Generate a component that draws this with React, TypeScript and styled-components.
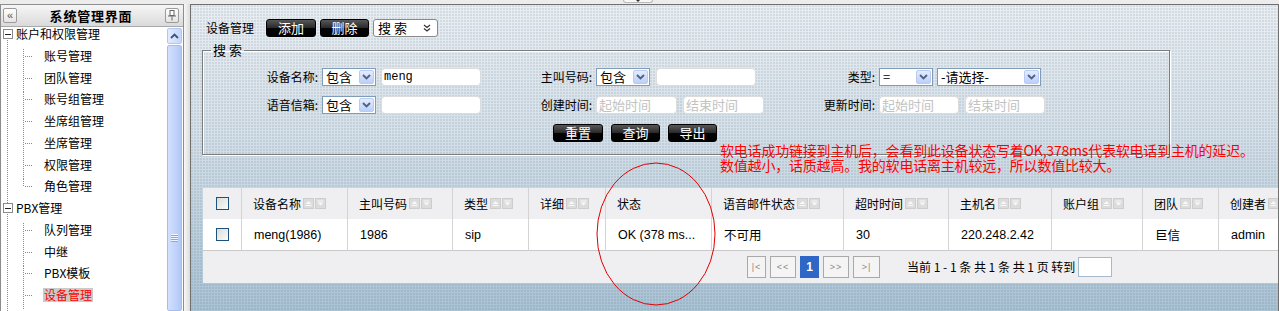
import React from 'react'
import styled, { createGlobalStyle } from 'styled-components'

const CN = `"Noto Sans CJK SC", "Noto Sans", sans-serif`
const LATIN = `"Liberation Sans", "Noto Sans CJK SC", sans-serif`

const GlobalStyle = createGlobalStyle`
  html, body { margin: 0; padding: 0; }
  body {
    background: #ececec;
    font-family: ${CN};
    font-size: 12px;
    color: #000;
    overflow: hidden;
  }
  * { box-sizing: border-box; }
`

const Page = styled.div`
  width: 1279px;
  height: 311px;
  display: flex;
  flex-direction: column;
  overflow: hidden;
`

const TopStrip = styled.div`
  height: 4px;
  flex: none;
  padding-left: 623px;
`

const CollapseTab = styled.div`
  width: 30px;
  height: 3px;
  background: #f6f6f6;
  border: 1px solid #b9b9b9;
  border-top: none;
  border-radius: 0 0 5px 5px;
  display: flex;
  justify-content: center;
`

const TabArrow = styled.span`
  width: 0;
  height: 0;
  border-left: 2px solid transparent;
  border-right: 2px solid transparent;
  border-top: 2px solid #333;
`

const Body = styled.div`
  flex: 1;
  display: flex;
  min-height: 0;
`

/* ---------- sidebar ---------- */

const Sidebar = styled.aside`
  width: 184px;
  flex: none;
  display: flex;
  flex-direction: column;
  background: #fff;
  border: 1px solid #8d8d8d;
  border-bottom: none;
`

const SideHeader = styled.div`
  height: 22px;
  flex: none;
  display: flex;
  align-items: center;
  padding: 0 4px 0 2px;
  background: linear-gradient(#f6f6f6, #dadada);
  border-bottom: 1px solid #a9a9a9;
`

const HeadButton = styled.div`
  width: 14px;
  height: 15px;
  flex: none;
  display: flex;
  align-items: center;
  justify-content: center;
  border: 1px solid #9b9b9b;
  border-radius: 2px;
  background: linear-gradient(#ffffff, #e4e4e4);
  color: #555;
  font-family: ${LATIN};
  font-size: 11px;
  line-height: 1;
`

const SideTitle = styled.div`
  flex: 1;
  text-align: center;
  font-weight: bold;
  font-size: 13px;
  line-height: 15px;
  letter-spacing: 0.8px;
`

const SideBody = styled.div`
  flex: 1;
  display: flex;
  min-height: 0;
`

const TreeList = styled.div`
  flex: 1;
  background: repeating-linear-gradient(to bottom, #8a8a8a 0 1px, transparent 1px 2px) 6px 13px / 1px 100% no-repeat;
`

const RootRow = styled.div`
  height: 21.75px;
  display: flex;
  align-items: flex-start;
  line-height: 14px;
  padding-left: 2px;
`

const RootBox = styled.span`
  width: 10px;
  height: 10px;
  margin-top: 2px;
  margin-right: 3px;
  flex: none;
  display: flex;
  align-items: center;
  justify-content: center;
  border: 1px solid #8a8a8a;
  background: #fff;

  &::after {
    content: '';
    width: 6px;
    height: 1px;
    background: #222;
  }
`

const ChildRow = styled.div<{ $last: boolean }>`
  position: relative;
  height: 21.75px;
  line-height: 14px;
  padding-left: 42px;

  &::before {
    content: '';
    position: absolute;
    left: 22px;
    top: 0;
    width: 1px;
    height: ${({ $last }) => ($last ? '8px' : '100%')};
    background: repeating-linear-gradient(to bottom, #8a8a8a 0 1px, transparent 1px 2px);
  }

  &::after {
    content: '';
    position: absolute;
    left: 23px;
    top: 7px;
    width: 8px;
    height: 1px;
    background: repeating-linear-gradient(to right, transparent 0 1px, #8a8a8a 1px 2px);
  }
`

const ChildLabel = styled.span<{ $selected: boolean }>`
  display: inline-block;
  padding: 0 1px;
  color: ${({ $selected }) => ($selected ? '#ff0000' : '#000')};
  background: ${({ $selected }) => ($selected ? '#cacaca' : 'transparent')};
`

const ScrollTrack = styled.div`
  width: 15px;
  flex: none;
  margin: 1px 1px 0 0;
  display: flex;
  flex-direction: column;
  gap: 1px;
`

const ScrollUp = styled.div`
  height: 16px;
  flex: none;
  display: flex;
  align-items: center;
  justify-content: center;
  border: 1px solid #b3c6ef;
  border-radius: 2px;
  background: linear-gradient(to right, #e3ecfe, #c5d6fb);
`

const ScrollThumb = styled.div`
  flex: 1;
  display: flex;
  justify-content: center;
  padding-top: 188px;
  border: 1px solid #a6bcea;
  border-radius: 2px;
  background: linear-gradient(to right, #d3e0fd, #bcd0fa 70%, #b1c7f5);
`

const Grip = styled.div`
  width: 7px;
  height: 8px;
  background: repeating-linear-gradient(to bottom, #eef4ff 0 1px, #8ea8dc 1px 2px);
`

const Splitter = styled.div`
  width: 6px;
  flex: none;
  background: linear-gradient(to right, #f8f8f8, #dcdcdc);
`

/* ---------- main panel ---------- */

const Main = styled.main`
  flex: 1;
  min-width: 0;
  position: relative;
  overflow: hidden;
  border: 1px solid #707070;
  border-bottom: none;
  background:
    radial-gradient(circle at 1px 1px, rgba(60, 90, 120, 0.12) 0.8px, transparent 1.1px) 0 0 / 3px 3px,
    linear-gradient(#e9eef2 0%, #d5e0e8 42%, #a9c2d3 100%);
`

const Toolbar = styled.div`
  display: flex;
  align-items: center;
  height: 18px;
  margin: 14px 0 0 15px;
`

const ToolbarTitle = styled.span`
  margin-right: 12px;
  line-height: 18px;
`

const BlackButton = styled.button<{ $w: number }>`
  width: ${({ $w }) => $w}px;
  height: 18px;
  padding: 0;
  margin-right: 4px;
  border: 1px solid #000;
  border-radius: 3px;
  background: linear-gradient(#585858 0%, #2a2a2a 48%, #050505 52%, #000 100%);
  color: #fff;
  font-family: ${CN};
  font-size: 13px;
  line-height: 16px;
`

const ToolSelect = styled.div`
  width: 65px;
  height: 18px;
  display: flex;
  align-items: center;
  justify-content: space-between;
  padding: 0 6px 0 4px;
  border: 1px solid #8a8a8a;
  border-radius: 3px;
  background: #fff;
  font-size: 13px;
  line-height: 16px;
`

const SearchSet = styled.fieldset`
  width: 968px;
  min-width: 0;
  margin: 6px 0 0 11px;
  padding: 11px 0 12px;
  border: 1px solid #7d7d7d;
  box-shadow: inset 1px 1px 0 #fff, 1px 1px 0 #fff;
`

const SearchLegend = styled.legend`
  margin-left: 8px;
  padding: 0 2px;
  font-size: 13px;
  line-height: 14px;
`

const FormGrid = styled.div`
  display: grid;
  grid-template-columns: 119px 159px 115px 168px 115px auto;
  row-gap: 10px;
  align-items: center;
`

const FieldLabel = styled.label`
  text-align: right;
  padding-right: 4px;
  line-height: 18px;
`

const Controls = styled.div<{ $gap: number }>`
  display: flex;
  gap: ${({ $gap }) => $gap}px;
`

const SelectBox = styled.div<{ $w: number }>`
  width: ${({ $w }) => $w}px;
  height: 18px;
  display: flex;
  align-items: center;
  justify-content: space-between;
  padding-left: 3px;
  border: 1px solid #7f9db9;
  background: #fff;
  font-size: 13px;
  line-height: 16px;
`

const DropButton = styled.span`
  width: 15px;
  height: 14px;
  margin-right: 1px;
  display: flex;
  align-items: center;
  justify-content: center;
  border: 1px solid #b9cbf3;
  border-radius: 2px;
  background: linear-gradient(#e4ecfe, #bccff9);
`

const TextInput = styled.div<{ $w: number; $mono?: boolean }>`
  width: ${({ $w }) => $w}px;
  height: 18px;
  padding-left: 2px;
  border: 1px solid #dcdcdc;
  border-radius: 4px;
  background: #fff;
  font-family: ${({ $mono }) => ($mono ? `"Liberation Mono", monospace` : CN)};
  font-size: ${({ $mono }) => ($mono ? '12px' : '13px')};
  line-height: 16px;
  color: ${({ $mono }) => ($mono ? '#000' : '#c2c2c2')};
`

const ActionRow = styled.div`
  display: flex;
  gap: 4px;
  margin-top: 10px;
  padding-left: 350px;
`

/* ---------- grid ---------- */

const TablePanel = styled.div`
  width: 1150px;
  margin: 33px 0 0 12px;
  background: #efeff2;
`

const Grid = styled.table`
  width: 1150px;
  table-layout: fixed;
  border-collapse: separate;
  border-spacing: 0;
`

const HeadCell = styled.th`
  height: 31px;
  padding: 0 0 0 11px;
  text-align: left;
  font-weight: normal;
  white-space: nowrap;
  overflow: hidden;
  background: #efeff2;
  border-right: 1px solid #d4d4d4;
`

const HeadInner = styled.span`
  display: inline-flex;
  align-items: center;
  gap: 2px;
`

const DataCell = styled.td`
  height: 32px;
  padding: 0 0 0 12px;
  white-space: nowrap;
  overflow: hidden;
  background: #fff;
  border-right: 1px solid #d4d4d4;
  border-bottom: 1px solid #c9c9c9;
  font-family: ${LATIN};
  font-size: 12.5px;
`

const CheckCell = styled.td<{ $head?: boolean }>`
  padding: 0 0 0 13px;
  border-right: 1px solid #d4d4d4;
  border-bottom: ${({ $head }) => ($head ? 'none' : '1px solid #c9c9c9')};
  background: ${({ $head }) => ($head ? '#efeff2' : '#fff')};
`

const CheckBox = styled.span`
  display: block;
  width: 13px;
  height: 13px;
  border: 1px solid #1c5180;
  background: linear-gradient(135deg, #dcdcd6, #fbfbfb);
`

const Pager = styled.div`
  height: 32px;
  display: flex;
  align-items: center;
  padding-left: 544px;
`

const PageButton = styled.span<{ $w: number; $active?: boolean }>`
  width: ${({ $w }) => $w}px;
  height: 22px;
  margin-right: 4px;
  display: flex;
  align-items: center;
  justify-content: center;
  border: 1px solid ${({ $active }) => ($active ? '#2f67c6' : '#a9a9a9')};
  background: ${({ $active }) => ($active ? '#2f67c6' : '#f4f4f4')};
  color: ${({ $active }) => ($active ? '#fff' : '#8a8a8a')};
  font-family: ${LATIN};
  font-size: ${({ $active }) => ($active ? '12px' : '9px')};
  font-weight: ${({ $active }) => ($active ? 'bold' : 'normal')};
  letter-spacing: ${({ $active }) => ($active ? '0' : '1px')};
`

const PagerText = styled.span`
  margin-left: 23px;
  line-height: 20px;
  white-space: pre;
`

const JumpInput = styled.span`
  width: 34px;
  height: 20px;
  margin-left: 3px;
  border: 1px solid #a5b9cf;
  background: #fff;
`

/* ---------- annotation drawn over the screenshot ---------- */

const Note = styled.div`
  position: absolute;
  left: 529px;
  top: 138px;
  color: #ff0000;
  font-size: 14px;
  letter-spacing: -0.2px;
`

const NoteLine = styled.div`
  height: 15px;
  line-height: 15px;
  white-space: nowrap;
`

const Circle = styled.svg`
  position: absolute;
  left: 405px;
  top: 157px;
`

const Chevron = ({ up = false, color = '#4d6185' }: { up?: boolean; color?: string }) => (
  <svg width="9" height="6" viewBox="0 0 9 6">
    <path
      d={up ? 'M1 5 L4.5 1.5 L8 5' : 'M1 1 L4.5 4.5 L8 1'}
      fill="none"
      stroke={color}
      strokeWidth="1.8"
    />
  </svg>
)

const DoubleChevron = () => (
  <svg width="8" height="8" viewBox="0 0 8 8">
    <path d="M1 1 L4 3.5 L7 1 M1 4.5 L4 7 L7 4.5" fill="none" stroke="#333" strokeWidth="1.2" />
  </svg>
)

const PinIcon = () => (
  <svg width="8" height="11" viewBox="0 0 8 11">
    <rect x="2" y="0.5" width="4" height="5" fill="#fff" stroke="#666" />
    <rect x="0" y="5.5" width="8" height="1" fill="#666" />
    <rect x="3.5" y="6.5" width="1" height="4" fill="#666" />
  </svg>
)

const SortIcons = () => (
  <svg width="23" height="11" viewBox="0 0 23 11">
    <rect x="0.5" y="0.5" width="10" height="10" fill="#dcdcdc" stroke="#cdcdcd" />
    <path d="M2.5 6 L5.5 3 L8.5 6 Z" fill="#f8f8f8" />
    <rect x="2.5" y="7" width="6" height="1" fill="#f8f8f8" />
    <rect x="12.5" y="0.5" width="10" height="10" fill="#dcdcdc" stroke="#cdcdcd" />
    <rect x="14.5" y="2.5" width="6" height="1" fill="#f8f8f8" />
    <path d="M14.5 4.5 L17.5 7.5 L20.5 4.5 Z" fill="#f8f8f8" />
  </svg>
)

const Select = ({ w, value }: { w: number; value: string }) => (
  <SelectBox $w={w}>
    <span>{value}</span>
    <DropButton>
      <Chevron />
    </DropButton>
  </SelectBox>
)

const treeGroups = [
  {
    title: '账户和权限管理',
    items: ['账号管理', '团队管理', '账号组管理', '坐席组管理', '坐席管理', '权限管理', '角色管理'],
    closed: true,
  },
  {
    title: 'PBX管理',
    items: ['队列管理', '中继', 'PBX模板', '设备管理'],
    closed: false,
  },
]

const selectedItem = '设备管理'

const columns = [
  { w: 39, title: '', sort: false },
  { w: 106, title: '设备名称', sort: true },
  { w: 105, title: '主叫号码', sort: true },
  { w: 76, title: '类型', sort: true },
  { w: 77, title: '详细', sort: true },
  { w: 106, title: '状态', sort: false },
  { w: 132, title: '语音邮件状态', sort: true },
  { w: 105, title: '超时时间', sort: true },
  { w: 103, title: '主机名', sort: true },
  { w: 91, title: '账户组', sort: true },
  { w: 76, title: '团队', sort: true },
  { w: 134, title: '创建者', sort: true },
]

const device = ['meng(1986)', '1986', 'sip', '', 'OK (378 ms...', '不可用', '30', '220.248.2.42', '', '巨信', 'admin']

export default function App() {
  return (
    <>
      <GlobalStyle />
      <Page>
        <TopStrip>
          <CollapseTab>
            <TabArrow />
          </CollapseTab>
        </TopStrip>
        <Body>
          <Sidebar>
            <SideHeader>
              <HeadButton>«</HeadButton>
              <SideTitle>系统管理界面</SideTitle>
              <HeadButton>
                <PinIcon />
              </HeadButton>
            </SideHeader>
            <SideBody>
              <TreeList>
                {treeGroups.map(g => (
                  <div key={g.title}>
                    <RootRow>
                      <RootBox />
                      <span>{g.title}</span>
                    </RootRow>
                    {g.items.map((item, i) => (
                      <ChildRow key={item} $last={g.closed && i === g.items.length - 1}>
                        <ChildLabel $selected={item === selectedItem}>{item}</ChildLabel>
                      </ChildRow>
                    ))}
                  </div>
                ))}
              </TreeList>
              <ScrollTrack>
                <ScrollUp>
                  <Chevron up color="#3d5382" />
                </ScrollUp>
                <ScrollThumb>
                  <Grip />
                </ScrollThumb>
              </ScrollTrack>
            </SideBody>
          </Sidebar>
          <Splitter />
          <Main>
            <Toolbar>
              <ToolbarTitle>设备管理</ToolbarTitle>
              <BlackButton $w={50}>添加</BlackButton>
              <BlackButton $w={49}>删除</BlackButton>
              <ToolSelect>
                <span>搜 索</span>
                <DoubleChevron />
              </ToolSelect>
            </Toolbar>

            <SearchSet>
              <SearchLegend>搜 索</SearchLegend>
              <FormGrid>
                <FieldLabel>设备名称:</FieldLabel>
                <Controls $gap={5}>
                  <Select w={54} value="包含" />
                  <TextInput $w={100} $mono>meng</TextInput>
                </Controls>
                <FieldLabel>主叫号码:</FieldLabel>
                <Controls $gap={6}>
                  <Select w={54} value="包含" />
                  <TextInput $w={100} />
                </Controls>
                <FieldLabel>类型:</FieldLabel>
                <Controls $gap={4}>
                  <Select w={54} value="=" />
                  <Select w={104} value="-请选择-" />
                </Controls>

                <FieldLabel>语音信箱:</FieldLabel>
                <Controls $gap={5}>
                  <Select w={54} value="包含" />
                  <TextInput $w={100} />
                </Controls>
                <FieldLabel>创建时间:</FieldLabel>
                <Controls $gap={6}>
                  <TextInput $w={81}>起始时间</TextInput>
                  <TextInput $w={81}>结束时间</TextInput>
                </Controls>
                <FieldLabel>更新时间:</FieldLabel>
                <Controls $gap={6}>
                  <TextInput $w={80}>起始时间</TextInput>
                  <TextInput $w={80}>结束时间</TextInput>
                </Controls>
              </FormGrid>
              <ActionRow>
                <BlackButton $w={50}>重置</BlackButton>
                <BlackButton $w={49}>查询</BlackButton>
                <BlackButton $w={49}>导出</BlackButton>
              </ActionRow>
            </SearchSet>

            <TablePanel>
              <Grid>
                <colgroup>
                  {columns.map((c, i) => (
                    <col key={i} style={{ width: c.w }} />
                  ))}
                </colgroup>
                <thead>
                  <tr>
                    {columns.map((c, i) =>
                      i === 0 ? (
                        <CheckCell as="th" $head key={i}>
                          <CheckBox />
                        </CheckCell>
                      ) : (
                        <HeadCell key={i}>
                          <HeadInner>
                            {c.title}
                            {c.sort && <SortIcons />}
                          </HeadInner>
                        </HeadCell>
                      )
                    )}
                  </tr>
                </thead>
                <tbody>
                  <tr>
                    <CheckCell>
                      <CheckBox />
                    </CheckCell>
                    {device.map((v, i) => (
                      <DataCell key={i}>{v}</DataCell>
                    ))}
                  </tr>
                </tbody>
              </Grid>
              <Pager>
                <PageButton $w={19}>|&lt;</PageButton>
                <PageButton $w={26}>&lt;&lt;</PageButton>
                <PageButton $w={19} $active>1</PageButton>
                <PageButton $w={26}>&gt;&gt;</PageButton>
                <PageButton $w={27}>&gt;|</PageButton>
                <PagerText>当前 1 - 1 条 共 1 条 共 1 页 转到</PagerText>
                <JumpInput />
              </Pager>
            </TablePanel>

            <Note>
              <NoteLine>软电话成功链接到主机后，会看到此设备状态写着OK,378ms代表软电话到主机的延迟。</NoteLine>
              <NoteLine>数值越小，话质越高。我的软电话离主机较远，所以数值比较大。</NoteLine>
            </Note>
            <Circle width="120" height="144" viewBox="0 0 120 144">
              <ellipse cx="60" cy="72" rx="59" ry="71" fill="none" stroke="#e00000" strokeWidth="1" />
            </Circle>
          </Main>
        </Body>
      </Page>
    </>
  )
}
